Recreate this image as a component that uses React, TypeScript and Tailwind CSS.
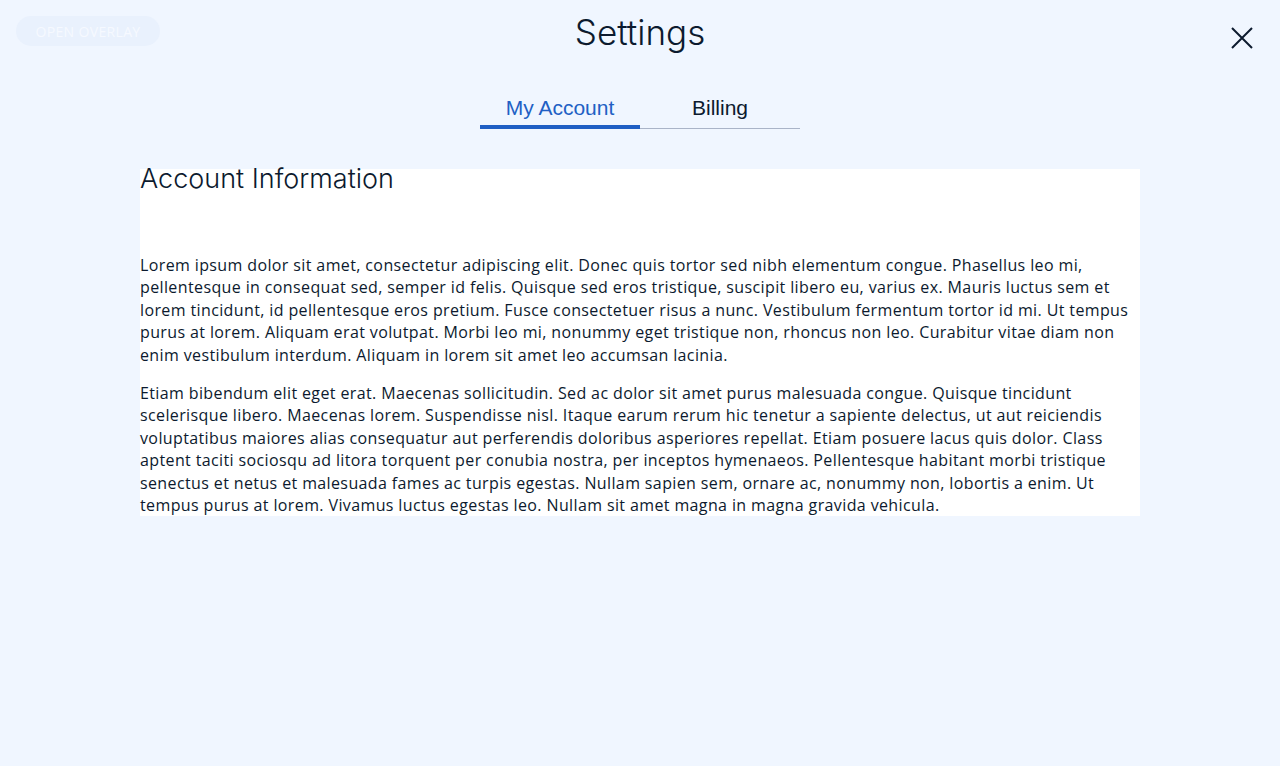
import { useState } from "react";

const heading = { fontFamily: "Inter, 'DejaVu Sans', sans-serif" };
const body = { fontFamily: "'Open Sans', 'Noto Sans', sans-serif" };
const tabFont = { fontFamily: "'Liberation Sans', Arial, sans-serif" };

const tabs = ["My Account", "Billing"];

export default function App() {
  const [active, setActive] = useState(0);

  return (
    <div className="min-h-[766px] bg-[#f0f6ff] text-[#0c1a2e] relative">
      {/* Overlay trigger */}
      <button
        className="absolute left-4 top-4 h-[30px] w-[144px] rounded-full bg-[#e9f1fd] text-[#f6f9ff] text-[14px] font-medium uppercase tracking-wide"
        style={body}
      >
        Open Overlay
      </button>

      {/* Close */}
      <button className="absolute right-[26px] top-[26px] w-6 h-6 flex items-center justify-center">
        <svg width="24" height="24" viewBox="0 0 24 24" fill="none" stroke="#0c1a2e" strokeWidth="2">
          <path d="M2 2L22 22M22 2L2 22" />
        </svg>
      </button>

      <div className="flex flex-col items-center">
        <h1 className="pt-[11px] text-[35px] leading-[42px] font-light" style={heading}>
          Settings
        </h1>

        <div className="mt-[41px] flex" style={tabFont}>
          {tabs.map((t, i) => (
            <button
              key={t}
              onClick={() => setActive(i)}
              className={`w-[160px] h-[35px] text-[21px] leading-[26px] ${
                active === i
                  ? "border-b-4 border-[#1f5fc4] text-[#2160c4] pb-[3px]"
                  : "border-b border-[#aab4c8] text-[#0c1a2e] pb-[6px]"
              }`}
            >
              {t}
            </button>
          ))}
        </div>

        <div className="mt-[40px] w-[1000px] bg-white" style={body}>
          <h2 className="text-[27px] leading-[20px] font-light" style={heading}>
            Account Information
          </h2>
          <div className="mt-[65px] text-[16px] leading-[22.4px] tracking-[0.38px] text-[#0c1a2e]">
            <p className="mb-4">
              Lorem ipsum dolor sit amet, consectetur adipiscing elit. Donec quis tortor sed nibh elementum congue. Phasellus leo mi, pellentesque in consequat sed, semper id felis. Quisque sed eros tristique, suscipit libero eu, varius ex. Mauris luctus sem et lorem tincidunt, id pellentesque eros pretium. Fusce consectetuer risus a nunc. Vestibulum fermentum tortor id mi. Ut tempus purus at lorem. Aliquam erat volutpat. Morbi leo mi, nonummy eget tristique non, rhoncus non leo. Curabitur vitae diam non enim vestibulum interdum. Aliquam in lorem sit amet leo accumsan lacinia.
            </p>
            <p>
              Etiam bibendum elit eget erat. Maecenas sollicitudin. Sed ac dolor sit amet purus malesuada congue. Quisque tincidunt scelerisque libero. Maecenas lorem. Suspendisse nisl. Itaque earum rerum hic tenetur a sapiente delectus, ut aut reiciendis voluptatibus maiores alias consequatur aut perferendis doloribus asperiores repellat. Etiam posuere lacus quis dolor. Class aptent taciti sociosqu ad litora torquent per conubia nostra, per inceptos hymenaeos. Pellentesque habitant morbi tristique senectus et netus et malesuada fames ac turpis egestas. Nullam sapien sem, ornare ac, nonummy non, lobortis a enim. Ut tempus purus at lorem. Vivamus luctus egestas leo. Nullam sit amet magna in magna gravida vehicula.
            </p>
          </div>
        </div>
      </div>
    </div>
  );
}
